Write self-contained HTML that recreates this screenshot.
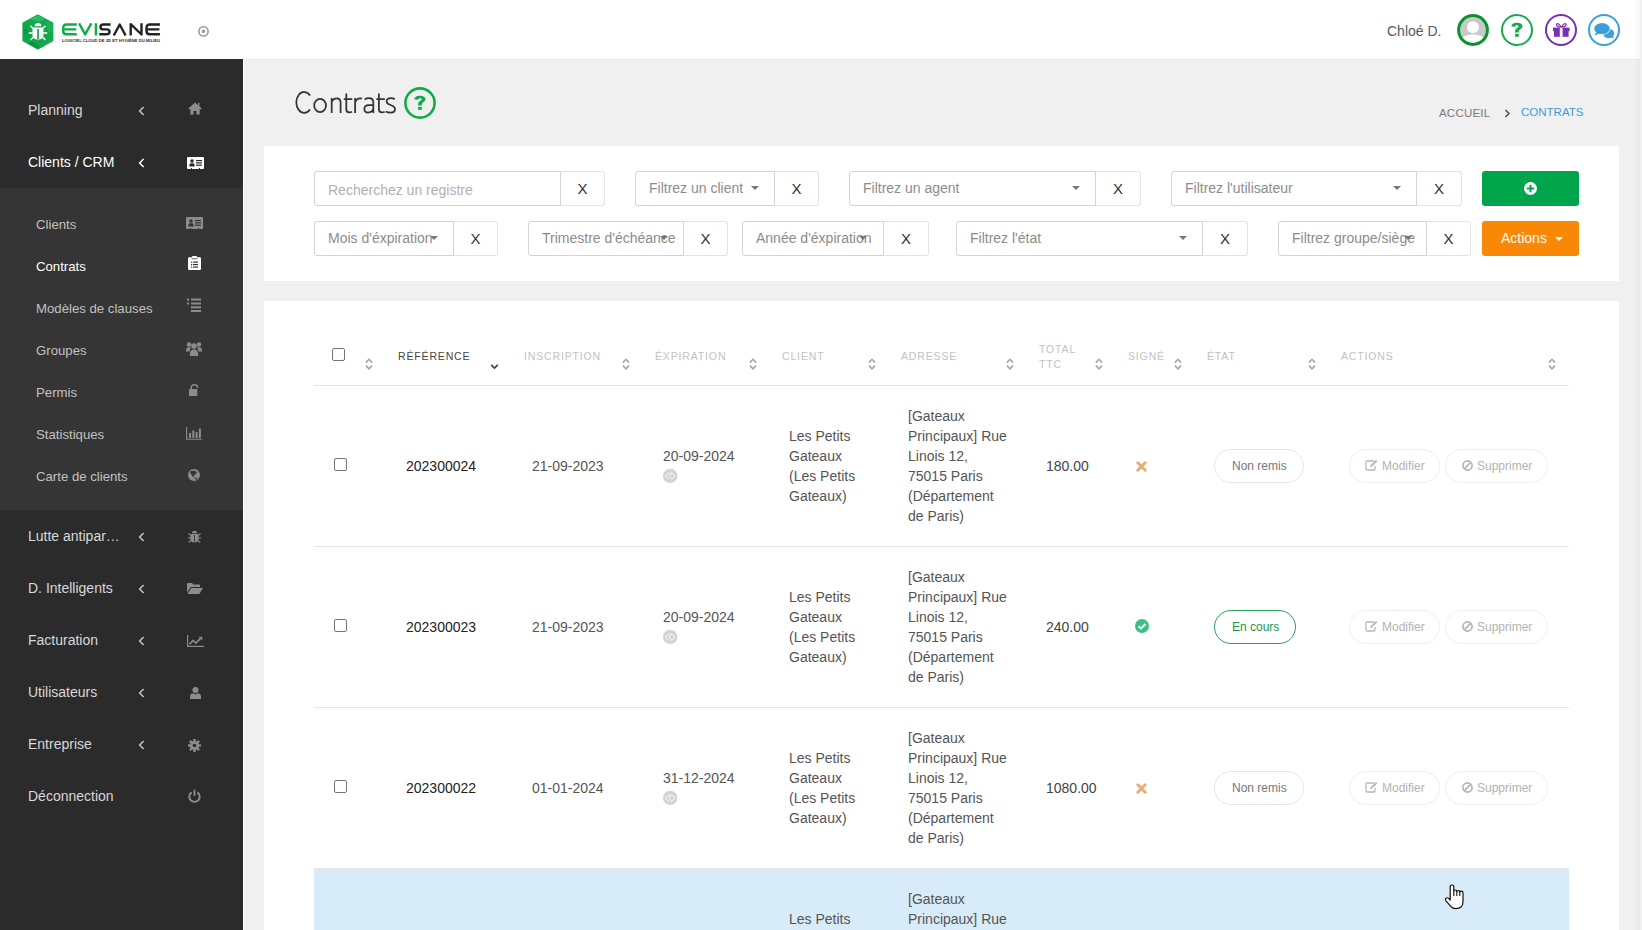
<!DOCTYPE html><html><head><meta charset="utf-8"><style>
*{box-sizing:border-box;margin:0;padding:0}
html,body{width:1642px;height:930px;overflow:hidden;background:#f0f0f0;font-family:"Liberation Sans",sans-serif;position:relative}
.a{position:absolute}
svg{display:block;overflow:visible}
#hdr{position:absolute;left:0;top:0;width:1642px;height:60px;background:#fff;border-bottom:1px solid #e9e9e9}
#side{position:absolute;left:0;top:59px;width:243px;height:871px;background:#2b2b2b}
#sideline{position:absolute;left:243px;top:59px;width:1px;height:871px;background:#fff}
.ti{position:absolute;left:0;width:243px;height:52px;}
.ti .t{position:absolute;left:28px;top:0;line-height:52px;font-size:14px;color:#d8d8d8;white-space:nowrap}
.ti.act .t{color:#fff}
#sub{position:absolute;left:0;top:188px;width:243px;height:322px;background:#353535}
.si{position:absolute;left:0;width:243px;height:42px}
.si .t{position:absolute;left:36px;top:1.5px;line-height:42px;font-size:13.2px;color:#c2c2c2;white-space:nowrap}
.si.act .t{color:#fff}
.box{position:absolute;left:264px;width:1355px;background:#fff}

.fsel{position:absolute;height:35px;border:1px solid #d3d3d3;border-radius:3px 0 0 3px;background:#fff;overflow:hidden}
.fsel .t{position:absolute;left:13px;top:0;line-height:33px;font-size:14px;color:#8c8c8c;white-space:nowrap}
.fx{position:absolute;height:35px;border:1px solid #e3e3e3;border-left:none;border-radius:0 3px 3px 0;background:#fff}
.fx span{position:absolute;left:0;right:0;top:0;text-align:center;line-height:33px;font-size:15px;color:#333}
.caret{position:absolute;width:0;height:0;border-left:4px solid transparent;border-right:4px solid transparent;border-top:4.5px solid #777}

.th{position:absolute;font-size:10.5px;line-height:15px;letter-spacing:0.85px;color:#c2c2c2;white-space:nowrap}
.cb{position:absolute;width:13px;height:13px;border:1px solid #767676;border-radius:2px;background:#fff}
.td{position:absolute;font-size:14px;line-height:20px;color:#555;white-space:nowrap}
.hl{position:absolute;left:314px;width:1255px;height:1px;background:#e6e6e6}
.pill{position:absolute;height:34px;border:1px solid #e6e6e6;border-radius:17px;font-size:12px;line-height:32px;color:#777;white-space:nowrap;background:transparent}
.pill.g{border-color:#27a257;color:#1f9448;border-width:1.5px;line-height:33px}
.pill.l{border-color:#efefef;color:#b3b3b3}
</style></head><body><div id="hdr"></div><div id="side"></div><div id="sideline"></div><div id="sub"></div>
<div class="ti" style="top:84px"><span class="t">Planning</span></div>
<svg class="a" style="left:138px;top:105.5px" width="7" height="10" viewBox="0 0 7 10"><path d="M5.6 0.9 L1.6 5 L5.6 9.1" fill="none" stroke="#c4c4c4" stroke-width="1.5"/></svg>
<div class="ti act" style="top:136px"><span class="t">Clients / CRM</span></div>
<svg class="a" style="left:138px;top:157.5px" width="7" height="10" viewBox="0 0 7 10"><path d="M5.6 0.9 L1.6 5 L5.6 9.1" fill="none" stroke="#fff" stroke-width="1.5"/></svg>
<div class="ti" style="top:510px"><span class="t">Lutte antipar…</span></div>
<svg class="a" style="left:138px;top:531.5px" width="7" height="10" viewBox="0 0 7 10"><path d="M5.6 0.9 L1.6 5 L5.6 9.1" fill="none" stroke="#c4c4c4" stroke-width="1.5"/></svg>
<div class="ti" style="top:562px"><span class="t">D. Intelligents</span></div>
<svg class="a" style="left:138px;top:583.5px" width="7" height="10" viewBox="0 0 7 10"><path d="M5.6 0.9 L1.6 5 L5.6 9.1" fill="none" stroke="#c4c4c4" stroke-width="1.5"/></svg>
<div class="ti" style="top:614px"><span class="t">Facturation</span></div>
<svg class="a" style="left:138px;top:635.5px" width="7" height="10" viewBox="0 0 7 10"><path d="M5.6 0.9 L1.6 5 L5.6 9.1" fill="none" stroke="#c4c4c4" stroke-width="1.5"/></svg>
<div class="ti" style="top:666px"><span class="t">Utilisateurs</span></div>
<svg class="a" style="left:138px;top:687.5px" width="7" height="10" viewBox="0 0 7 10"><path d="M5.6 0.9 L1.6 5 L5.6 9.1" fill="none" stroke="#c4c4c4" stroke-width="1.5"/></svg>
<div class="ti" style="top:718px"><span class="t">Entreprise</span></div>
<svg class="a" style="left:138px;top:739.5px" width="7" height="10" viewBox="0 0 7 10"><path d="M5.6 0.9 L1.6 5 L5.6 9.1" fill="none" stroke="#c4c4c4" stroke-width="1.5"/></svg>
<div class="ti" style="top:770px"><span class="t">Déconnection</span></div>
<div class="a" style="left:188px;top:102px"><svg width="14" height="13" viewBox="0 0 14 13"><path d="M7 0.5 L0.3 6.6 L1.3 7.6 L2.3 6.7 V12.6 H5.6 V9 H8.4 V12.6 H11.7 V6.7 L12.7 7.6 L13.7 6.6 L11.4 4.5 V1 H10 V3.2 Z" fill="#8c8c8c"/></svg></div>
<div class="a" style="left:187px;top:157px"><svg width="17" height="12" viewBox="0 0 17 12"><rect x="0" y="0" width="17" height="12" rx="1" fill="#fff"/><circle cx="5" cy="4" r="1.8" fill="#2b2b2b"/><path d="M2.3 9.6 C2.3 6.8 3.2 6.3 5 6.3 C6.8 6.3 7.7 6.8 7.7 9.6 Z" fill="#2b2b2b"/><rect x="9" y="3" width="6" height="1.2" fill="#2b2b2b"/><rect x="9" y="5.3" width="6" height="1.2" fill="#2b2b2b"/><rect x="9" y="7.6" width="6" height="1.2" fill="#2b2b2b"/><rect x="4" y="11" width="1" height="1" fill="#2b2b2b"/><rect x="12" y="11" width="1" height="1" fill="#2b2b2b"/></svg></div>
<div class="a" style="left:188px;top:530px"><svg width="13" height="13" viewBox="0 0 13 13"><path d="M4 3.2 C4 1.6 5 0.8 6.5 0.8 C8 0.8 9 1.6 9 3.2Z" fill="#8c8c8c"/><path d="M3 4 H10 C10.6 5 10.8 6.5 10.8 8 C10.8 11 9 12.6 6.5 12.6 C4 12.6 2.2 11 2.2 8 C2.2 6.5 2.4 5 3 4Z" fill="#8c8c8c"/><rect x="6.1" y="5" width="0.8" height="7" fill="#2b2b2b"/><path d="M0.5 3.5 L2.8 5.4 M12.5 3.5 L10.2 5.4 M0 8 H2.5 M13 8 H10.5 M0.7 12.5 L2.8 10.6 M12.3 12.5 L10.2 10.6" stroke="#8c8c8c" stroke-width="1.1"/></svg></div>
<div class="a" style="left:187px;top:583px"><svg width="16" height="11" viewBox="0 0 16 11"><path d="M0 1 C0 0.4 0.4 0 1 0 H5 L6.3 1.4 H12 C12.6 1.4 13 1.8 13 2.4 V4 H3.8 L0 9.5Z" fill="#8c8c8c"/><path d="M4.2 5 H16 L12.3 11 H0.4Z" fill="#8c8c8c"/></svg></div>
<div class="a" style="left:187px;top:635px"><svg width="17" height="12" viewBox="0 0 17 12"><path d="M0.6 0 V11.4 H17" fill="none" stroke="#8c8c8c" stroke-width="1.2"/><path d="M2.5 9.2 L6.2 5.5 L8.8 8 L13.3 3.6" fill="none" stroke="#8c8c8c" stroke-width="1.7"/><path d="M11.5 1.8 H15.3 V5.6Z" fill="#8c8c8c"/></svg></div>
<div class="a" style="left:190px;top:687px"><svg width="11" height="12" viewBox="0 0 11 12"><circle cx="5.5" cy="3" r="3" fill="#8c8c8c"/><path d="M0 12 V9.5 C0 7.3 1.5 6.3 3.4 6.3 L5.5 7.5 L7.6 6.3 C9.5 6.3 11 7.3 11 9.5 V12Z" fill="#8c8c8c"/></svg></div>
<div class="a" style="left:188px;top:739px"><svg width="13" height="13" viewBox="0 0 13 13"><g fill="#8c8c8c"><circle cx="6.5" cy="6.5" r="4.6"/><rect x="5.3" y="0" width="2.4" height="13"/><rect x="0" y="5.3" width="13" height="2.4"/><rect x="5.3" y="0" width="2.4" height="13" transform="rotate(45 6.5 6.5)"/><rect x="5.3" y="0" width="2.4" height="13" transform="rotate(-45 6.5 6.5)"/></g><circle cx="6.5" cy="6.5" r="1.8" fill="#2b2b2b"/></svg></div>
<div class="a" style="left:188px;top:789px"><svg width="13" height="14" viewBox="0 0 13 14"><path d="M3.6 3.4 A5.2 5.2 0 1 0 9.4 3.4" fill="none" stroke="#8c8c8c" stroke-width="1.9"/><rect x="5.6" y="0.5" width="1.8" height="6.5" rx="0.4" fill="#8c8c8c"/></svg></div>
<div class="si" style="top:202px"><span class="t">Clients</span></div>
<div class="si act" style="top:244px"><span class="t">Contrats</span></div>
<div class="si" style="top:286px"><span class="t">Modèles de clauses</span></div>
<div class="si" style="top:328px"><span class="t">Groupes</span></div>
<div class="si" style="top:370px"><span class="t">Permis</span></div>
<div class="si" style="top:412px"><span class="t">Statistiques</span></div>
<div class="si" style="top:454px"><span class="t">Carte de clients</span></div>
<div class="a" style="left:186px;top:217px"><svg width="17" height="12" viewBox="0 0 17 12"><rect x="0" y="0" width="17" height="12" rx="1" fill="#8c8c8c"/><circle cx="5" cy="4" r="1.8" fill="#353535"/><path d="M2.3 9.6 C2.3 6.8 3.2 6.3 5 6.3 C6.8 6.3 7.7 6.8 7.7 9.6 Z" fill="#353535"/><rect x="9" y="3" width="6" height="1.2" fill="#353535"/><rect x="9" y="5.3" width="6" height="1.2" fill="#353535"/><rect x="9" y="7.6" width="6" height="1.2" fill="#353535"/><rect x="4" y="11" width="1" height="1" fill="#353535"/><rect x="12" y="11" width="1" height="1" fill="#353535"/></svg></div>
<div class="a" style="left:188px;top:256px"><svg width="13" height="14" viewBox="0 0 13 14"><rect x="0" y="1.3" width="13" height="12.7" rx="1.2" fill="#fff"/><rect x="4" y="0" width="5" height="3" rx="1" fill="#fff"/><rect x="3.6" y="2.4" width="5.8" height="0.8" fill="#353535"/><rect x="3" y="5.5" width="1.2" height="1.2" fill="#353535"/><rect x="5" y="5.5" width="5" height="1.2" fill="#353535"/><rect x="3" y="8" width="1.2" height="1.2" fill="#353535"/><rect x="5" y="8" width="5" height="1.2" fill="#353535"/><rect x="3" y="10.5" width="1.2" height="1.2" fill="#353535"/><rect x="5" y="10.5" width="5" height="1.2" fill="#353535"/></svg></div>
<div class="a" style="left:187px;top:298px"><svg width="14" height="14" viewBox="0 0 14 14"><rect x="0" y="0.5" width="2" height="2" fill="#8c8c8c"/><rect x="4" y="0.5" width="10" height="2" fill="#8c8c8c"/><rect x="0" y="4.5" width="2" height="2" fill="#8c8c8c"/><rect x="4" y="4.5" width="10" height="2" fill="#8c8c8c"/><rect x="4" y="8.3" width="10" height="2" fill="#8c8c8c"/><rect x="4" y="12" width="10" height="2" fill="#8c8c8c"/></svg></div>
<div class="a" style="left:186px;top:342px"><svg width="16" height="14" viewBox="0 0 16 14"><circle cx="3" cy="2.5" r="2.2" fill="#8c8c8c"/><circle cx="13" cy="2.5" r="2.2" fill="#8c8c8c"/><circle cx="8" cy="4" r="2.8" fill="#8c8c8c"/><path d="M0 9 C0 6 1 5.3 3 5.3 C4.3 5.3 4.8 5.8 5 6.3 C4 7 3.6 8 3.6 9.5 H0Z" fill="#8c8c8c"/><path d="M16 9 C16 6 15 5.3 13 5.3 C11.7 5.3 11.2 5.8 11 6.3 C12 7 12.4 8 12.4 9.5 H16Z" fill="#8c8c8c"/><path d="M3.8 14 C3.8 9 5 7.5 8 7.5 C11 7.5 12.2 9 12.2 14 Z" fill="#8c8c8c"/></svg></div>
<div class="a" style="left:189px;top:384px"><svg width="10" height="12" viewBox="0 0 10 12"><path d="M2.3 5.2 V3.4 C2.3 1.5 3.7 0.7 5.4 0.7 C7.1 0.7 8.5 1.6 8.5 3.4 V4" fill="none" stroke="#8c8c8c" stroke-width="1.5"/><rect x="0" y="5" width="8.3" height="7" rx="0.6" fill="#8c8c8c"/></svg></div>
<div class="a" style="left:186px;top:427px"><svg width="16" height="13" viewBox="0 0 16 13"><path d="M0.6 0 V12.2 H16" fill="none" stroke="#8c8c8c" stroke-width="1.1"/><rect x="3" y="6" width="2" height="5" fill="#8c8c8c"/><rect x="6.3" y="3.5" width="2" height="7.5" fill="#8c8c8c"/><rect x="9.6" y="5" width="2" height="6" fill="#8c8c8c"/><rect x="12.9" y="1.6" width="2" height="9.4" fill="#8c8c8c"/></svg></div>
<div class="a" style="left:188px;top:469px"><svg width="12" height="12" viewBox="0 0 12 12"><circle cx="6" cy="6" r="6" fill="#8c8c8c"/><path d="M2.3 2.6 C3.4 1.6 5.8 1.7 7 2.1 L9 3 L5.8 6.4 L4.6 7.8 C4.1 6.5 3.5 5 2.3 4.5 Z" fill="#353535"/><path d="M9.3 3.1 L5.3 7.3 L7.3 9.4 L10.2 9.8" fill="none" stroke="#353535" stroke-width="0.7"/><circle cx="8.3" cy="9.8" r="0.9" fill="#353535"/></svg></div>
<svg class="a" style="left:0;top:0" width="220" height="59" viewBox="0 0 220 59">
<defs><clipPath id="hx"><path d="M37.8 15.2 L52.6 23.3 V40.6 L37.8 48.8 L23.2 40.6 V23.3 Z"/></clipPath></defs>
<path d="M37.8 15.2 L52.6 23.3 V40.6 L37.8 48.8 L23.2 40.6 V23.3 Z" fill="#12a74b" stroke="#12a74b" stroke-width="1.6" stroke-linejoin="round"/>
<g clip-path="url(#hx)"><path d="M30 19 L37.8 14 L46 19 L37.8 22Z" fill="#33c46f" opacity="0.7"/><path d="M46 19 L54 23 L54 34 L47 30Z" fill="#1db45a" opacity="0.8"/><path d="M26 44 L37.8 50 L40 46 L32 41Z" fill="#0a8a3a" opacity="0.75"/><path d="M23 28 L28 30 L24 36Z" fill="#0a8f3a" opacity="0.7"/><path d="M44 44 L53 38 L52 42 L40 50Z" fill="#20b860" opacity="0.6"/></g>
<path d="M34.6 26.2 C34.6 24 36 23 38 23 C40 23 41.5 24 41.5 26.2 Z" fill="#fff"/>
<path d="M32.5 27.5 H43.4 V35.5 C43.4 38 41.6 39.5 38 39.5 C34.4 39.5 32.5 38 32.5 35.5 Z" fill="#fff"/>
<rect x="37.2" y="29" width="1.7" height="10" fill="#12a74b"/>
<path d="M30.4 25.8 L33.2 28.6 M45.5 25.8 L42.7 28.6 M28.8 33 H32.8 M47.2 33 H43.2 M30.4 40 L33.2 37.3 M45.5 40 L42.7 37.3" stroke="#fff" stroke-width="1.4"/>
<g fill="none" stroke-width="2.4" stroke-linejoin="round">
<path d="M76.8 24.5 H66.5 Q63.2 24.5 63.2 27.8 V31 Q63.2 34.3 66.5 34.3 H76.8 M63.2 29.4 H76.3" stroke="#10ac48"/>
<path d="M79.1 23.3 L85.2 34.4 L91.3 23.3" stroke="#10ac48"/>
<path d="M95.9 23.3 V35.5" stroke="#10ac48"/>
<path d="M110.6 24.5 H103.6 Q100.5 24.5 100.5 26.95 Q100.5 29.4 103.6 29.4 H106.6 Q109.6 29.4 109.6 31.85 Q109.6 34.3 106.6 34.3 H99.3" stroke="#222"/>
<path d="M113.8 35.5 L119.7 24.5 L125.6 35.5" stroke="#222"/>
<path d="M130.7 35.5 V24.2 L141.5 34.5 V23.3" stroke="#222"/>
<path d="M159.9 24.5 H149.8 Q146.5 24.5 146.5 27.8 V31 Q146.5 34.3 149.8 34.3 H159.9 M146.5 29.4 H159.4" stroke="#222"/>
</g>
<text x="62" y="42" font-family="Liberation Sans" font-weight="bold" font-size="4" fill="#2a2a2a" textLength="98" lengthAdjust="spacingAndGlyphs">LOGICIEL CLOUD DE 3D ET HYGIÈNE DU MILIEU</text>
<circle cx="203.5" cy="31.4" r="4.6" fill="none" stroke="#9a9a9a" stroke-width="1.6"/><circle cx="203.5" cy="31.4" r="1.8" fill="#9a9a9a"/>
</svg>
<div class="a" style="left:1387px;top:23px;font-size:14px;line-height:16px;color:#595959;white-space:nowrap">Chloé D.</div>
<svg class="a" style="left:1457px;top:14px" width="32" height="32" viewBox="0 0 32 32"><defs><clipPath id="av"><circle cx="16" cy="16" r="14"/></clipPath></defs><circle cx="16" cy="16" r="14.5" fill="#c8c8ca"/><g clip-path="url(#av)" fill="#fff"><circle cx="16" cy="13.2" r="6"/><path d="M1 34 C1 24.5 8 20.6 16 20.6 C24 20.6 31 24.5 31 34Z"/></g><circle cx="16" cy="16" r="14.4" fill="none" stroke="#0b922f" stroke-width="3"/></svg>
<svg class="a" style="left:1501px;top:14px" width="32" height="32" viewBox="0 0 32 32"><circle cx="16" cy="16" r="15" fill="#fff" stroke="#14a94b" stroke-width="2"/><g transform="translate(16 0) scale(1.28 1) translate(-16.1 0)"><path d="M11.8 12.6 C11.8 9.9 13.6 8.8 16.1 8.8 C18.7 8.8 20.4 10.2 20.4 12.3 C20.4 14.9 17.5 15.2 17.5 17.7 V18.4 H14.6 V17.4 C14.6 14.3 17.3 14.1 17.3 12.6 C17.3 11.8 16.8 11.3 16 11.3 C15.1 11.3 14.7 11.9 14.7 12.8 Z" fill="#14a94b"/><rect x="14.6" y="19.8" width="2.9" height="3" fill="#14a94b"/></g></svg>
<svg class="a" style="left:1545px;top:14px" width="32" height="32" viewBox="0 0 32 32"><circle cx="16" cy="16" r="15" fill="#fff" stroke="#7a2db5" stroke-width="2"/><g fill="#7a2db5"><rect x="8" y="13.6" width="16.6" height="3.6"/><rect x="9" y="17" width="14.6" height="5.8"/></g><path d="M16 13 C14.5 10 12.6 9 11.6 10.2 C10.8 11.3 12.4 13 16 13.3Z M16.6 13 C18.1 10 20 9 21 10.2 C21.8 11.3 20.2 13 16.6 13.3Z" fill="none" stroke="#7a2db5" stroke-width="1.2"/><rect x="14.8" y="13.6" width="2.8" height="9.2" fill="#fff"/></svg>
<svg class="a" style="left:1588px;top:14px" width="32" height="32" viewBox="0 0 32 32"><circle cx="16" cy="16" r="15" fill="#fff" stroke="#3a9edb" stroke-width="2"/><g fill="#3a9edb"><ellipse cx="20.6" cy="19.6" rx="5.6" ry="4.6"/><path d="M22 22.8 L25.8 24.8 L24.6 20.8Z"/></g><ellipse cx="14" cy="14.6" rx="8.6" ry="6.2" fill="#fff"/><g fill="#3a9edb"><ellipse cx="14" cy="14.6" rx="7.8" ry="5.5"/><path d="M8.4 18 L6.4 21.4 L11.6 19.4Z"/></g></svg>
<svg class="a" style="left:0;top:0" width="420" height="130" viewBox="0 0 420 130"><g fill="none" stroke="#333" stroke-width="1.75" stroke-linecap="butt">
<path d="M310.05 95.4 A7.9 10.4 0 1 0 310.05 109.4"/>
<ellipse cx="320.1" cy="105.5" rx="5.9" ry="6.6"/>
<path d="M331.7 98 V113.1 M331.7 101.6 Q333.4 98.4 336.6 98.4 Q340.6 98.4 340.6 102.8 V113.1"/>
<path d="M346.3 93.6 V109.3 Q346.3 112.3 349.1 112.3 Q350.9 112.3 352.1 111.7 M343.8 99 H352.3"/>
<path d="M355.1 98 V113.1 M355.1 102.6 Q356.3 98.4 360.1 98.4 Q361.3 98.4 362 98.6"/>
<path d="M364.6 99.4 Q366.5 98.2 368.9 98.2 Q373.3 98.2 373.3 102.6 V113.1 M373.3 105 H368.6 Q364.4 105 364.4 108.9 Q364.4 112.5 368.1 112.5 Q371.6 112.5 373.3 109.4"/>
<path d="M378.9 93.6 V109.3 Q378.9 112.3 381.7 112.3 Q383.5 112.3 384.7 111.7 M376.4 99 H384.9"/>
<path d="M394.8 99.3 Q393.3 98.2 390.8 98.2 Q386.7 98.2 386.7 101.4 Q386.7 103.7 390.6 105 Q395 106.4 395 109.3 Q395 112.6 390.6 112.6 Q387.6 112.6 385.8 111.4"/>
</g></svg>
<svg class="a" style="left:404px;top:87px" width="32" height="32" viewBox="0 0 32 32"><circle cx="16" cy="16" r="14.6" fill="none" stroke="#14a94b" stroke-width="2.6"/><g transform="translate(16 0) scale(1.28 1) translate(-16.1 0)"><path d="M11.8 12.6 C11.8 9.9 13.6 8.8 16.1 8.8 C18.7 8.8 20.4 10.2 20.4 12.3 C20.4 14.9 17.5 15.2 17.5 17.7 V18.4 H14.6 V17.4 C14.6 14.3 17.3 14.1 17.3 12.6 C17.3 11.8 16.8 11.3 16 11.3 C15.1 11.3 14.7 11.9 14.7 12.8 Z" fill="#14a94b"/><rect x="14.6" y="19.8" width="2.9" height="3" fill="#14a94b"/></g></svg>
<div class="a" style="left:1439px;top:107px;font-size:11.5px;line-height:13px;color:#7a7a7a;letter-spacing:0.2px;white-space:nowrap">ACCUEIL</div>
<svg class="a" style="left:1504px;top:109px" width="7" height="9" viewBox="0 0 7 9"><path d="M1.5 1 L5 4.5 L1.5 8" fill="none" stroke="#555" stroke-width="1.6"/></svg>
<div class="a" style="left:1521px;top:106px;font-size:11.5px;line-height:13px;color:#3d9de0;letter-spacing:0px;white-space:nowrap">CONTRATS</div>
<div class="box" style="top:146px;height:135px"></div>
<div class="fsel" style="left:314px;top:171px;width:247px"><span class="t" style="left:13px;top:2px;color:#b0b0b0">Recherchez un registre</span></div>
<div class="fx" style="left:561px;top:171px;width:44px"><span>X</span></div>
<div class="fsel" style="left:635px;top:171px;width:140px"><span class="t" style="left:13px;">Filtrez un client</span></div>
<div class="caret" style="left:751px;top:186px"></div>
<div class="fx" style="left:775px;top:171px;width:44px"><span>X</span></div>
<div class="fsel" style="left:849px;top:171px;width:247px"><span class="t" style="left:13px;">Filtrez un agent</span></div>
<div class="caret" style="left:1072px;top:186px"></div>
<div class="fx" style="left:1096px;top:171px;width:45px"><span>X</span></div>
<div class="fsel" style="left:1171px;top:171px;width:246px"><span class="t" style="left:13px;">Filtrez l'utilisateur</span></div>
<div class="caret" style="left:1393px;top:186px"></div>
<div class="fx" style="left:1417px;top:171px;width:45px"><span>X</span></div>
<div class="fsel" style="left:314px;top:221px;width:140px"><span class="t" style="left:13px;">Mois d'éxpiration</span></div>
<div class="caret" style="left:430px;top:236px"></div>
<div class="fx" style="left:454px;top:221px;width:44px"><span>X</span></div>
<div class="fsel" style="left:528px;top:221px;width:156px"><span class="t" style="left:13px;">Trimestre d'échéance</span></div>
<div class="caret" style="left:660px;top:236px"></div>
<div class="fx" style="left:684px;top:221px;width:44px"><span>X</span></div>
<div class="fsel" style="left:742px;top:221px;width:142px"><span class="t" style="left:13px;">Année d'éxpiration</span></div>
<div class="caret" style="left:859px;top:236px"></div>
<div class="fx" style="left:884px;top:221px;width:45px"><span>X</span></div>
<div class="fsel" style="left:956px;top:221px;width:247px"><span class="t" style="left:13px;">Filtrez l'état</span></div>
<div class="caret" style="left:1179px;top:236px"></div>
<div class="fx" style="left:1203px;top:221px;width:45px"><span>X</span></div>
<div class="fsel" style="left:1278px;top:221px;width:149px"><span class="t" style="left:13px;">Filtrez groupe/siège</span></div>
<div class="caret" style="left:1404px;top:236px"></div>
<div class="fx" style="left:1427px;top:221px;width:44px"><span>X</span></div>
<div class="a" style="left:1482px;top:171px;width:97px;height:35px;background:#00a54b;border-radius:3px"></div>
<svg class="a" style="left:1524px;top:181.5px" width="13" height="13" viewBox="0 0 13 13"><circle cx="6.5" cy="6.5" r="6.5" fill="#fff"/><rect x="5.5" y="2.8" width="2" height="7.4" fill="#00a54b"/><rect x="2.8" y="5.5" width="7.4" height="2" fill="#00a54b"/></svg>
<div class="a" style="left:1482px;top:221px;width:97px;height:35px;background:#f98806;border-radius:3px"></div>
<div class="a" style="left:1501px;top:221px;line-height:35px;font-size:14px;color:#fff;white-space:nowrap">Actions</div>
<div class="caret" style="left:1555px;top:237px;border-top-color:#fff;border-left-width:4px;border-right-width:4px;border-top-width:4px"></div>
<div class="box" style="top:301px;height:629px"></div>
<div class="a" style="left:314px;top:869px;width:1255px;height:61px;background:#d7ebf9"></div>
<div class="cb" style="left:332px;top:348px"></div>
<svg class="a" style="left:365px;top:357.5px" width="8" height="12" viewBox="0 0 8 12"><path d="M0.9 4.6 L4 1.3 L7.1 4.6 M0.9 7.6 L4 10.9 L7.1 7.6" fill="none" stroke="#a6a6a6" stroke-width="1.6"/></svg>
<div class="th" style="left:398px;top:349px;color:#444">RÉFÉRENCE</div>
<svg class="a" style="left:490px;top:363px" width="9" height="7" viewBox="0 0 9 7"><path d="M1.2 1.8 L4.5 5 L7.8 1.8" fill="none" stroke="#444" stroke-width="1.7"/></svg>
<div class="th" style="left:524px;top:349px">INSCRIPTION</div>
<svg class="a" style="left:622px;top:357.5px" width="8" height="12" viewBox="0 0 8 12"><path d="M0.9 4.6 L4 1.3 L7.1 4.6 M0.9 7.6 L4 10.9 L7.1 7.6" fill="none" stroke="#a6a6a6" stroke-width="1.6"/></svg>
<div class="th" style="left:655px;top:349px">ÉXPIRATION</div>
<svg class="a" style="left:749px;top:357.5px" width="8" height="12" viewBox="0 0 8 12"><path d="M0.9 4.6 L4 1.3 L7.1 4.6 M0.9 7.6 L4 10.9 L7.1 7.6" fill="none" stroke="#a6a6a6" stroke-width="1.6"/></svg>
<div class="th" style="left:782px;top:349px">CLIENT</div>
<svg class="a" style="left:868px;top:357.5px" width="8" height="12" viewBox="0 0 8 12"><path d="M0.9 4.6 L4 1.3 L7.1 4.6 M0.9 7.6 L4 10.9 L7.1 7.6" fill="none" stroke="#a6a6a6" stroke-width="1.6"/></svg>
<div class="th" style="left:901px;top:349px">ADRESSE</div>
<svg class="a" style="left:1005.5px;top:357.5px" width="8" height="12" viewBox="0 0 8 12"><path d="M0.9 4.6 L4 1.3 L7.1 4.6 M0.9 7.6 L4 10.9 L7.1 7.6" fill="none" stroke="#a6a6a6" stroke-width="1.6"/></svg>
<div class="th" style="left:1039px;top:341.5px">TOTAL<br>TTC</div>
<svg class="a" style="left:1095px;top:357.5px" width="8" height="12" viewBox="0 0 8 12"><path d="M0.9 4.6 L4 1.3 L7.1 4.6 M0.9 7.6 L4 10.9 L7.1 7.6" fill="none" stroke="#a6a6a6" stroke-width="1.6"/></svg>
<div class="th" style="left:1128px;top:349px">SIGNÉ</div>
<svg class="a" style="left:1174px;top:357.5px" width="8" height="12" viewBox="0 0 8 12"><path d="M0.9 4.6 L4 1.3 L7.1 4.6 M0.9 7.6 L4 10.9 L7.1 7.6" fill="none" stroke="#a6a6a6" stroke-width="1.6"/></svg>
<div class="th" style="left:1207px;top:349px">ÉTAT</div>
<svg class="a" style="left:1308px;top:357.5px" width="8" height="12" viewBox="0 0 8 12"><path d="M0.9 4.6 L4 1.3 L7.1 4.6 M0.9 7.6 L4 10.9 L7.1 7.6" fill="none" stroke="#a6a6a6" stroke-width="1.6"/></svg>
<div class="th" style="left:1341px;top:349px">ACTIONS</div>
<svg class="a" style="left:1548px;top:357.5px" width="8" height="12" viewBox="0 0 8 12"><path d="M0.9 4.6 L4 1.3 L7.1 4.6 M0.9 7.6 L4 10.9 L7.1 7.6" fill="none" stroke="#a6a6a6" stroke-width="1.6"/></svg>
<div class="hl" style="top:385px"></div>
<div class="hl" style="top:546px"></div>
<div class="cb" style="left:334px;top:458px"></div>
<div class="td" style="left:406px;top:456px;color:#222">202300024</div>
<div class="td" style="left:532px;top:456px">21-09-2023</div>
<div class="td" style="left:663px;top:446px">20-09-2024</div>
<div class="a" style="left:662px;top:467.5px"><svg width="16" height="16" viewBox="0 0 16 16"><circle cx="8.2" cy="7.9" r="7.2" fill="#d3d3d3"/><path d="M6.8 4.6 L3.4 8 L6.8 11.4 M9.6 4.6 L13 8 L9.6 11.4 M6.8 4.6 L8.4 6.2 L7.2 8 L8.8 9.8 L9.6 11.4 M9.6 4.6 L9 6.2" fill="none" stroke="#fff" stroke-width="0.9" stroke-linejoin="round"/></svg></div>
<div class="td" style="left:789px;top:426px">Les Petits<br>Gateaux<br>(Les Petits<br>Gateaux)</div>
<div class="td" style="left:908px;top:406px">[Gateaux<br>Principaux] Rue<br>Linois 12,<br>75015 Paris<br>(Département<br>de Paris)</div>
<div class="td" style="left:1046px;top:456px;color:#444">180.00</div>
<svg class="a" style="left:1136px;top:460.5px" width="11" height="11" viewBox="0 0 11 11"><path d="M1.8 1.8 L9.2 9.2 M9.2 1.8 L1.8 9.2" stroke="#ebab76" stroke-width="3" stroke-linecap="round"/></svg>
<div class="pill" style="left:1214px;top:449px;width:90px;padding-left:17px">Non remis</div>
<div class="pill l" style="left:1349px;top:449px;width:91px;padding-left:32px">Modifier</div>
<svg class="a" style="left:1365px;top:459px" width="13" height="12" viewBox="0 0 13 12"><path d="M9 2 H2.2 Q1 2 1 3.2 V10 Q1 11 2.2 11 H9 Q10 11 10 10 V7" fill="none" stroke="#b8b8b8" stroke-width="1.3"/><path d="M11 0.8 L12.4 2.2 L7 7.6 L5 8.2 L5.6 6.2 Z" fill="#b8b8b8"/></svg>
<div class="pill l" style="left:1445px;top:449px;width:103px;padding-left:31px">Supprimer</div>
<svg class="a" style="left:1462px;top:460px" width="11" height="11" viewBox="0 0 11 11"><circle cx="5.5" cy="5.5" r="4.6" fill="none" stroke="#b3b3b3" stroke-width="1.6"/><path d="M2.4 8.6 L8.6 2.4" stroke="#b3b3b3" stroke-width="1.6"/></svg>
<div class="hl" style="top:707px"></div>
<div class="cb" style="left:334px;top:619px"></div>
<div class="td" style="left:406px;top:617px;color:#222">202300023</div>
<div class="td" style="left:532px;top:617px">21-09-2023</div>
<div class="td" style="left:663px;top:607px">20-09-2024</div>
<div class="a" style="left:662px;top:628.5px"><svg width="16" height="16" viewBox="0 0 16 16"><circle cx="8.2" cy="7.9" r="7.2" fill="#d3d3d3"/><path d="M6.8 4.6 L3.4 8 L6.8 11.4 M9.6 4.6 L13 8 L9.6 11.4 M6.8 4.6 L8.4 6.2 L7.2 8 L8.8 9.8 L9.6 11.4 M9.6 4.6 L9 6.2" fill="none" stroke="#fff" stroke-width="0.9" stroke-linejoin="round"/></svg></div>
<div class="td" style="left:789px;top:587px">Les Petits<br>Gateaux<br>(Les Petits<br>Gateaux)</div>
<div class="td" style="left:908px;top:567px">[Gateaux<br>Principaux] Rue<br>Linois 12,<br>75015 Paris<br>(Département<br>de Paris)</div>
<div class="td" style="left:1046px;top:617px;color:#444">240.00</div>
<svg class="a" style="left:1135px;top:619px" width="14" height="14" viewBox="0 0 14 14"><circle cx="7" cy="7" r="7" fill="#3cbf84"/><path d="M3.6 7.2 L6 9.5 L10.5 5" fill="none" stroke="#fff" stroke-width="1.9"/></svg>
<div class="pill g" style="left:1214px;top:610px;width:82px;padding-left:17px">En cours</div>
<div class="pill l" style="left:1349px;top:610px;width:91px;padding-left:32px">Modifier</div>
<svg class="a" style="left:1365px;top:620px" width="13" height="12" viewBox="0 0 13 12"><path d="M9 2 H2.2 Q1 2 1 3.2 V10 Q1 11 2.2 11 H9 Q10 11 10 10 V7" fill="none" stroke="#b8b8b8" stroke-width="1.3"/><path d="M11 0.8 L12.4 2.2 L7 7.6 L5 8.2 L5.6 6.2 Z" fill="#b8b8b8"/></svg>
<div class="pill l" style="left:1445px;top:610px;width:103px;padding-left:31px">Supprimer</div>
<svg class="a" style="left:1462px;top:621px" width="11" height="11" viewBox="0 0 11 11"><circle cx="5.5" cy="5.5" r="4.6" fill="none" stroke="#b3b3b3" stroke-width="1.6"/><path d="M2.4 8.6 L8.6 2.4" stroke="#b3b3b3" stroke-width="1.6"/></svg>
<div class="hl" style="top:868px"></div>
<div class="cb" style="left:334px;top:780px"></div>
<div class="td" style="left:406px;top:778px;color:#222">202300022</div>
<div class="td" style="left:532px;top:778px">01-01-2024</div>
<div class="td" style="left:663px;top:768px">31-12-2024</div>
<div class="a" style="left:662px;top:789.5px"><svg width="16" height="16" viewBox="0 0 16 16"><circle cx="8.2" cy="7.9" r="7.2" fill="#d3d3d3"/><path d="M6.8 4.6 L3.4 8 L6.8 11.4 M9.6 4.6 L13 8 L9.6 11.4 M6.8 4.6 L8.4 6.2 L7.2 8 L8.8 9.8 L9.6 11.4 M9.6 4.6 L9 6.2" fill="none" stroke="#fff" stroke-width="0.9" stroke-linejoin="round"/></svg></div>
<div class="td" style="left:789px;top:748px">Les Petits<br>Gateaux<br>(Les Petits<br>Gateaux)</div>
<div class="td" style="left:908px;top:728px">[Gateaux<br>Principaux] Rue<br>Linois 12,<br>75015 Paris<br>(Département<br>de Paris)</div>
<div class="td" style="left:1046px;top:778px;color:#444">1080.00</div>
<svg class="a" style="left:1136px;top:782.5px" width="11" height="11" viewBox="0 0 11 11"><path d="M1.8 1.8 L9.2 9.2 M9.2 1.8 L1.8 9.2" stroke="#ebab76" stroke-width="3" stroke-linecap="round"/></svg>
<div class="pill" style="left:1214px;top:771px;width:90px;padding-left:17px">Non remis</div>
<div class="pill l" style="left:1349px;top:771px;width:91px;padding-left:32px">Modifier</div>
<svg class="a" style="left:1365px;top:781px" width="13" height="12" viewBox="0 0 13 12"><path d="M9 2 H2.2 Q1 2 1 3.2 V10 Q1 11 2.2 11 H9 Q10 11 10 10 V7" fill="none" stroke="#b8b8b8" stroke-width="1.3"/><path d="M11 0.8 L12.4 2.2 L7 7.6 L5 8.2 L5.6 6.2 Z" fill="#b8b8b8"/></svg>
<div class="pill l" style="left:1445px;top:771px;width:103px;padding-left:31px">Supprimer</div>
<svg class="a" style="left:1462px;top:782px" width="11" height="11" viewBox="0 0 11 11"><circle cx="5.5" cy="5.5" r="4.6" fill="none" stroke="#b3b3b3" stroke-width="1.6"/><path d="M2.4 8.6 L8.6 2.4" stroke="#b3b3b3" stroke-width="1.6"/></svg>
<div class="cb" style="left:334px;top:941px"></div>
<div class="td" style="left:406px;top:939px;color:#222">202300021</div>
<div class="td" style="left:532px;top:939px">01-01-2024</div>
<div class="td" style="left:663px;top:929px">31-12-2024</div>
<div class="a" style="left:662px;top:950.5px"><svg width="16" height="16" viewBox="0 0 16 16"><circle cx="8.2" cy="7.9" r="7.2" fill="#d3d3d3"/><path d="M6.8 4.6 L3.4 8 L6.8 11.4 M9.6 4.6 L13 8 L9.6 11.4 M6.8 4.6 L8.4 6.2 L7.2 8 L8.8 9.8 L9.6 11.4 M9.6 4.6 L9 6.2" fill="none" stroke="#fff" stroke-width="0.9" stroke-linejoin="round"/></svg></div>
<div class="td" style="left:789px;top:909px">Les Petits<br>Gateaux<br>(Les Petits<br>Gateaux)</div>
<div class="td" style="left:908px;top:889px">[Gateaux<br>Principaux] Rue<br>Linois 12,<br>75015 Paris<br>(Département<br>de Paris)</div>
<div class="td" style="left:1046px;top:939px;color:#444">1080.00</div>
<svg class="a" style="left:1136px;top:943.5px" width="11" height="11" viewBox="0 0 11 11"><path d="M1.8 1.8 L9.2 9.2 M9.2 1.8 L1.8 9.2" stroke="#ebab76" stroke-width="3" stroke-linecap="round"/></svg>
<div class="pill" style="left:1214px;top:932px;width:90px;padding-left:17px">Non remis</div>
<div class="pill l" style="left:1349px;top:932px;width:91px;padding-left:32px">Modifier</div>
<svg class="a" style="left:1365px;top:942px" width="13" height="12" viewBox="0 0 13 12"><path d="M9 2 H2.2 Q1 2 1 3.2 V10 Q1 11 2.2 11 H9 Q10 11 10 10 V7" fill="none" stroke="#b8b8b8" stroke-width="1.3"/><path d="M11 0.8 L12.4 2.2 L7 7.6 L5 8.2 L5.6 6.2 Z" fill="#b8b8b8"/></svg>
<div class="pill l" style="left:1445px;top:932px;width:103px;padding-left:31px">Supprimer</div>
<svg class="a" style="left:1462px;top:943px" width="11" height="11" viewBox="0 0 11 11"><circle cx="5.5" cy="5.5" r="4.6" fill="none" stroke="#b3b3b3" stroke-width="1.6"/><path d="M2.4 8.6 L8.6 2.4" stroke="#b3b3b3" stroke-width="1.6"/></svg>
<div class="a" style="left:1633px;top:0;width:7px;height:930px;background:linear-gradient(to right,rgba(0,0,0,0),rgba(0,0,0,0.032))"></div>
<div class="a" style="left:1640px;top:0;width:2px;height:930px;background:#f0f0f0"></div>
<svg class="a" style="left:1444px;top:884px" width="21" height="26" viewBox="0 0 21 26"><path d="M6.2 3 Q6.2 1 8 1 Q9.8 1 9.8 3 V7.5 Q9.8 6 11.3 6 Q12.8 6 12.8 7.5 Q12.8 6.6 14.3 6.6 Q15.8 6.6 15.8 8.2 Q15.8 7.2 17.4 7.2 Q19 7.2 19 9 V17.5 Q19 21.5 17 23 Q15.2 24.6 12 24.6 Q8.6 24.6 7 22.6 L2 16.8 Q0.8 15.2 2 14.2 Q3.3 13.2 4.8 14.4 L6.2 16 Z" fill="#fff" stroke="#111" stroke-width="1.2" stroke-linejoin="round"/><path d="M9.8 7.5 V12 M12.8 7.5 V12 M15.8 8.2 V12" stroke="#111" stroke-width="1.1"/></svg></body></html>
